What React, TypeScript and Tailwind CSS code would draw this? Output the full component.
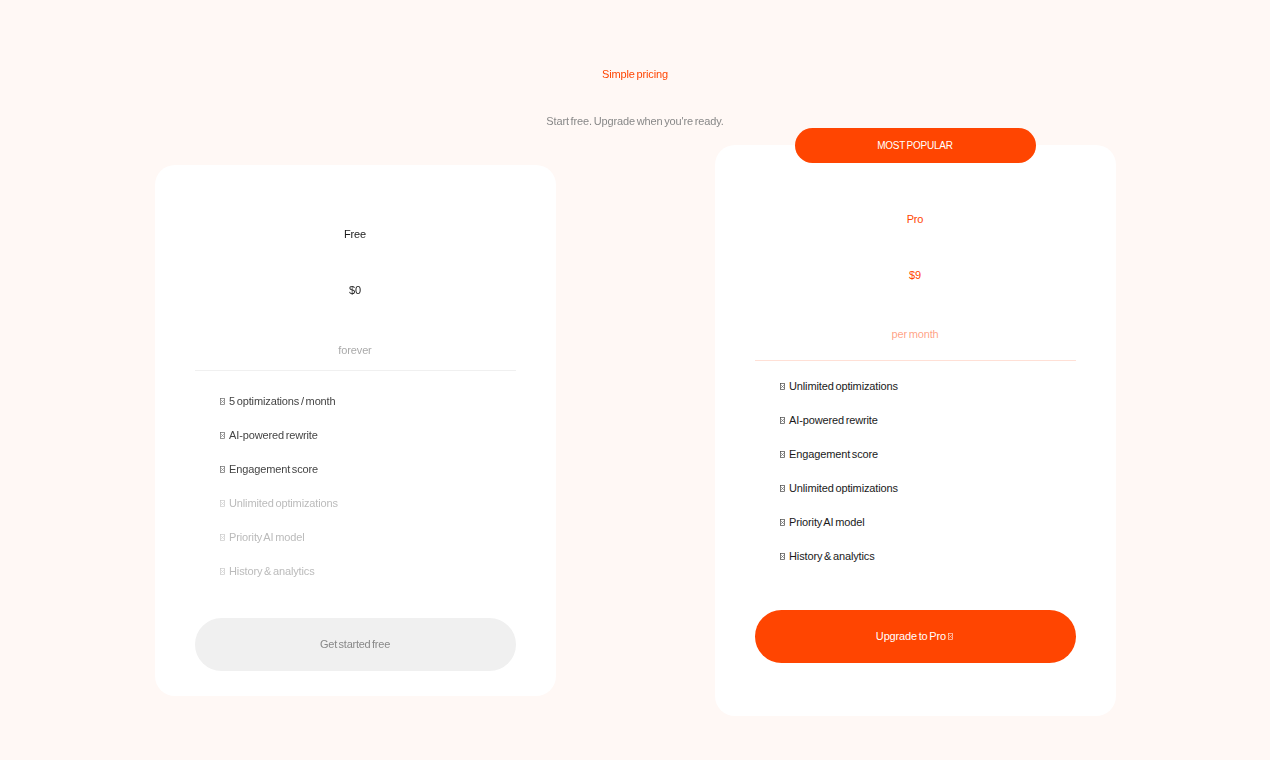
const freeFeatures = [
  { label: "5 optimizations / month", on: true },
  { label: "AI-powered rewrite", on: true },
  { label: "Engagement score", on: true },
  { label: "Unlimited optimizations", on: false },
  { label: "Priority AI model", on: false },
  { label: "History & analytics", on: false },
];

const proFeatures = [
  "Unlimited optimizations",
  "AI-powered rewrite",
  "Engagement score",
  "Unlimited optimizations",
  "Priority AI model",
  "History & analytics",
];

// the little crossed box in front of each row
const Box = () => (
  <svg width="5" height="7" viewBox="0 0 5 7" className="inline-block mr-[4.5px] align-[0px] opacity-80" fill="none" stroke="currentColor" strokeWidth="0.7">
    <rect x="0.4" y="0.4" width="4.2" height="6.2" />
    <path d="M0.5 1.5L4.5 5.5M4.5 1.5L0.5 5.5" strokeWidth="0.5" />
  </svg>
);

export default function App() {
  return (
    <div className="min-h-screen bg-[#fff8f5] font-['Liberation_Sans',sans-serif] text-[11px] leading-[14px] tracking-[-0.13px] [word-spacing:-1.2px]">
      <div className="opacity-[0.999]">
        <div className="pt-[67px] text-center text-[#ff4500]">Simple pricing</div>
        <div className="pt-[33px] text-center text-[#888888]">Start free. Upgrade when you're ready.</div>

        <div className="flex justify-center items-center gap-[159px] pt-[17px]">
          <div className="w-[401px] h-[531px] bg-white rounded-[20px] px-[40px] pt-[62px]">
            <div className="text-center text-[#1a1a1a]">Free</div>
            <div className="text-center text-[#1a1a1a] mt-[42px]">$0</div>
            <div className="text-center text-[#aaaaaa] mt-[46px] pb-[13px] border-b border-[#f0f0f0]">forever</div>
            <ul className="mt-[23px] flex flex-col gap-[20px] pl-[25px]">
              {freeFeatures.map((f) => (
                <li key={f.label} className={f.on ? "text-[#444444]" : "text-[#bbbbbb]"}>
                  <Box />{f.label}
                </li>
              ))}
            </ul>
            <button className="mt-[40px] w-full h-[53px] pb-[2px] rounded-full bg-[#f0f0f0] text-[#888888] tracking-[-0.25px] [word-spacing:-1.2px]">Get started free</button>
          </div>

          <div className="relative w-[401px] h-[571px] bg-white rounded-[20px] px-[40px] pt-[67px]">
            <div className="absolute left-[80px] top-[-17px] w-[241px] h-[35px] rounded-full bg-[#ff4500] text-white text-[10px] tracking-[-0.2px] flex items-center justify-center">MOST POPULAR</div>
            <div className="text-center text-[#ff4500]">Pro</div>
            <div className="text-center text-[#ff4500] mt-[42px]">$9</div>
            <div className="text-center text-[#ff4500]/50 mt-[45px] pb-[19px] border-b border-[#ffe0d6]">per month</div>
            <ul className="mt-[18px] flex flex-col gap-[20px] pl-[25px]">
              {proFeatures.map((f, i) => (
                <li key={i} className="text-[#1a1a1a]"><Box />{f}</li>
              ))}
            </ul>
            <button className="mt-[47px] w-full h-[53px] pb-[2px] pl-[3px] rounded-full bg-[#ff4500] text-white tracking-[-0.15px] [word-spacing:-1.2px]">Upgrade to Pro <Box /></button>
          </div>
        </div>
      </div>
    </div>
  );
}
